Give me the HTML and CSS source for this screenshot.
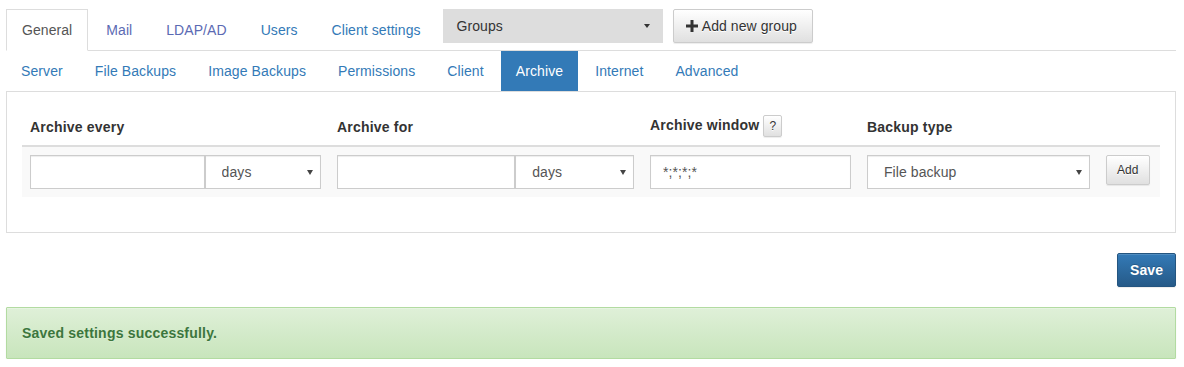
FILE: index.html
```html
<!DOCTYPE html>
<html lang="en">
<head>
  <meta charset="UTF-8">
  <title>Settings - Archive</title>
  <meta name="viewport" content="width=device-width, initial-scale=1.0">
  <link rel="stylesheet" href="styles.css">
</head>
<body>
  <div class="page">
    <ul class="nav-tabs">
      <li class="active"><a href="#">General</a></li>
      <li><a href="#" class="visited">Mail</a></li>
      <li><a href="#" class="visited">LDAP/AD</a></li>
      <li><a href="#">Users</a></li>
      <li><a href="#">Client settings</a></li>
      <li class="group-item">
        <div class="group-select">
          <span>Groups</span>
          <span class="caret"></span>
        </div>
      </li>
      <li class="add-group-item">
        <button class="btn btn-default btn-add-group">
          <svg class="icon-plus" width="12" height="12" viewBox="0 0 12 12"><path d="M4.5 0h3v4.5H12v3H7.5V12h-3V7.5H0v-3h4.5z" fill="#333"/></svg>
          Add new group
        </button>
      </li>
    </ul>

    <ul class="nav-pills">
      <li><a href="#">Server</a></li>
      <li><a href="#">File Backups</a></li>
      <li><a href="#">Image Backups</a></li>
      <li><a href="#">Permissions</a></li>
      <li><a href="#">Client</a></li>
      <li class="active"><a href="#">Archive</a></li>
      <li><a href="#">Internet</a></li>
      <li><a href="#">Advanced</a></li>
    </ul>

    <div class="panel">
      <table class="archive-table">
        <colgroup>
          <col class="col-every">
          <col class="col-for">
          <col class="col-window">
          <col class="col-type">
          <col class="col-add">
        </colgroup>
        <thead>
          <tr>
            <th>Archive every</th>
            <th>Archive for</th>
            <th>Archive window <button class="btn btn-default btn-xs">?</button></th>
            <th>Backup type</th>
            <th></th>
          </tr>
        </thead>
        <tbody>
          <tr>
            <td>
              <div class="input-group">
                <input type="text" class="form-control">
                <div class="select-wrap">
                  <select class="form-control"><option>days</option></select>
                </div>
              </div>
            </td>
            <td>
              <div class="input-group">
                <input type="text" class="form-control">
                <div class="select-wrap">
                  <select class="form-control"><option>days</option></select>
                </div>
              </div>
            </td>
            <td><input type="text" class="form-control" value="*;*;*;*"></td>
            <td>
              <div class="select-wrap">
                <select class="form-control"><option>File backup</option></select>
              </div>
            </td>
            <td><button class="btn btn-default btn-sm">Add</button></td>
          </tr>
        </tbody>
      </table>
    </div>

    <div class="save-row">
      <button class="btn btn-primary">Save</button>
    </div>

    <div class="alert alert-success">Saved settings successfully.</div>
  </div>
</body>
</html>
```

FILE: styles.css
```css
body {
  font-family: 'Liberation Sans', Arial, sans-serif;
  font-size: 14px;
  line-height: 20px;
  letter-spacing: 0.07px;
  color: #333;
  background: #fff;
  margin: 0;
  padding: 0;
}
.page {
  padding: 9px 8px 0 6px;
}
ul {
  list-style: none;
  margin: 0;
  padding: 0;
}
a {
  color: #337ab7;
  text-decoration: none;
}

/* top tabs */
.nav-tabs {
  display: flex;
  align-items: flex-start;
  border-bottom: 1px solid #ddd;
}
.nav-tabs li {
  margin-right: 2px;
}
.nav-tabs li a {
  display: block;
  padding: 10px 15px;
  border: 1px solid transparent;
  margin-bottom: -1px;
}
.nav-tabs li a.visited {
  color: #5b6ab3;
}
.nav-tabs li.active a {
  color: #555;
  background: #fff;
  border-color: #ddd;
  border-bottom-color: #fff;
}
.group-item {
  margin-left: 4px;
}
.group-select {
  display: flex;
  align-items: center;
  justify-content: space-between;
  box-sizing: border-box;
  width: 220px;
  height: 34px;
  padding: 0 13px 0 14px;
  background: #ddd;
  color: #333;
}
.caret {
  width: 0;
  height: 0;
  border-top: 4px solid #333;
  border-left: 3px solid transparent;
  border-right: 3px solid transparent;
}
.add-group-item {
  margin-left: 8px;
}

/* buttons */
.btn {
  font-family: inherit;
  letter-spacing: inherit;
  display: inline-block;
  cursor: pointer;
  border: 1px solid #ccc;
  border-radius: 2px;
  color: #333;
  font-size: 14px;
  line-height: 20px;
  padding: 6px 12px;
}
.btn-default {
  background: linear-gradient(to bottom, #fff 0%, #e0e0e0 100%);
  border-color: #ccc;
  text-shadow: 0 1px 0 #fff;
  box-shadow: inset 0 1px 0 rgba(255,255,255,0.15), 0 1px 1px rgba(0,0,0,0.075);
}
.btn-add-group {
  height: 34px;
  width: 140px;
  padding: 6px 12px;
  text-align: left;
  white-space: nowrap;
}
.icon-plus {
  display: inline-block;
  vertical-align: -1px;
  margin-right: 1px;
}
.btn-xs {
  font-size: 12px;
  line-height: 18px;
  padding: 1px 5px;
}
.btn-sm {
  font-size: 12px;
  line-height: 18px;
  padding: 5px 10px;
}
.btn-primary {
  color: #fff;
  font-weight: bold;
  background: linear-gradient(to bottom, #337ab7 0%, #265a88 100%);
  border-color: #245580;
  text-shadow: 0 -1px 0 rgba(0,0,0,0.2);
  box-shadow: inset 0 1px 0 rgba(255,255,255,0.15), 0 1px 1px rgba(0,0,0,0.075);
}

/* sub tabs */
.nav-pills {
  display: flex;
  letter-spacing: 0.1px;
}
.nav-pills li {
  margin-right: 2px;
}
.nav-pills li a {
  display: block;
  padding: 10px 15px;
}
.nav-pills li.active a {
  background: #337ab7;
  color: #fff;
}

/* panel + table */
.panel {
  border: 1px solid #ddd;
  padding: 15px;
  margin-bottom: 20px;
}
.archive-table {
  width: 100%;
  table-layout: fixed;
  border-collapse: collapse;
  margin-bottom: 20px;
}
.col-every { width: 307px; }
.col-for { width: 313px; }
.col-window { width: 217px; }
.col-type { width: 239px; }
.col-add { width: 62px; }
.archive-table th {
  text-align: left;
  vertical-align: bottom;
  padding: 8px;
  border-bottom: 2px solid #ddd;
  font-weight: bold;
  letter-spacing: 0.2px;
}
.archive-table td {
  padding: 8px;
  vertical-align: top;
  background: #f9f9f9;
}
.form-control {
  display: block;
  box-sizing: border-box;
  width: 100%;
  height: 34px;
  padding: 6px 12px;
  font-family: inherit;
  font-size: 14px;
  line-height: 20px;
  letter-spacing: inherit;
  color: #555;
  background: #fff;
  border: 1px solid #ccc;
  border-radius: 0;
  box-shadow: inset 0 1px 1px rgba(0,0,0,0.075);
  margin: 0;
}
.input-group {
  display: flex;
}
.input-group input {
  flex: 0 0 60%;
}
.input-group .select-wrap {
  flex: 1;
}
.select-wrap {
  position: relative;
}
.select-wrap select {
  -webkit-appearance: none;
  appearance: none;
  padding-left: 16px;
}
.select-wrap::after {
  content: '';
  position: absolute;
  right: 8px;
  top: 15px;
  width: 0;
  height: 0;
  border-top: 5px solid #444;
  border-left: 3px solid transparent;
  border-right: 3px solid transparent;
  pointer-events: none;
}

.save-row {
  display: flex;
  justify-content: flex-end;
  margin-bottom: 20px;
}

.alert {
  padding: 15px;
  border: 1px solid transparent;
  border-radius: 1px;
}
.alert-success {
  color: #3c763d;
  font-weight: bold;
  letter-spacing: 0.2px;
  background: linear-gradient(to bottom, #dff0d8 0%, #c8e5bc 100%);
  border-color: #b2dba1;
  text-shadow: 0 1px 0 rgba(255,255,255,0.2);
  box-shadow: inset 0 1px 0 rgba(255,255,255,0.25), 0 1px 2px rgba(0,0,0,0.05);
}
```
